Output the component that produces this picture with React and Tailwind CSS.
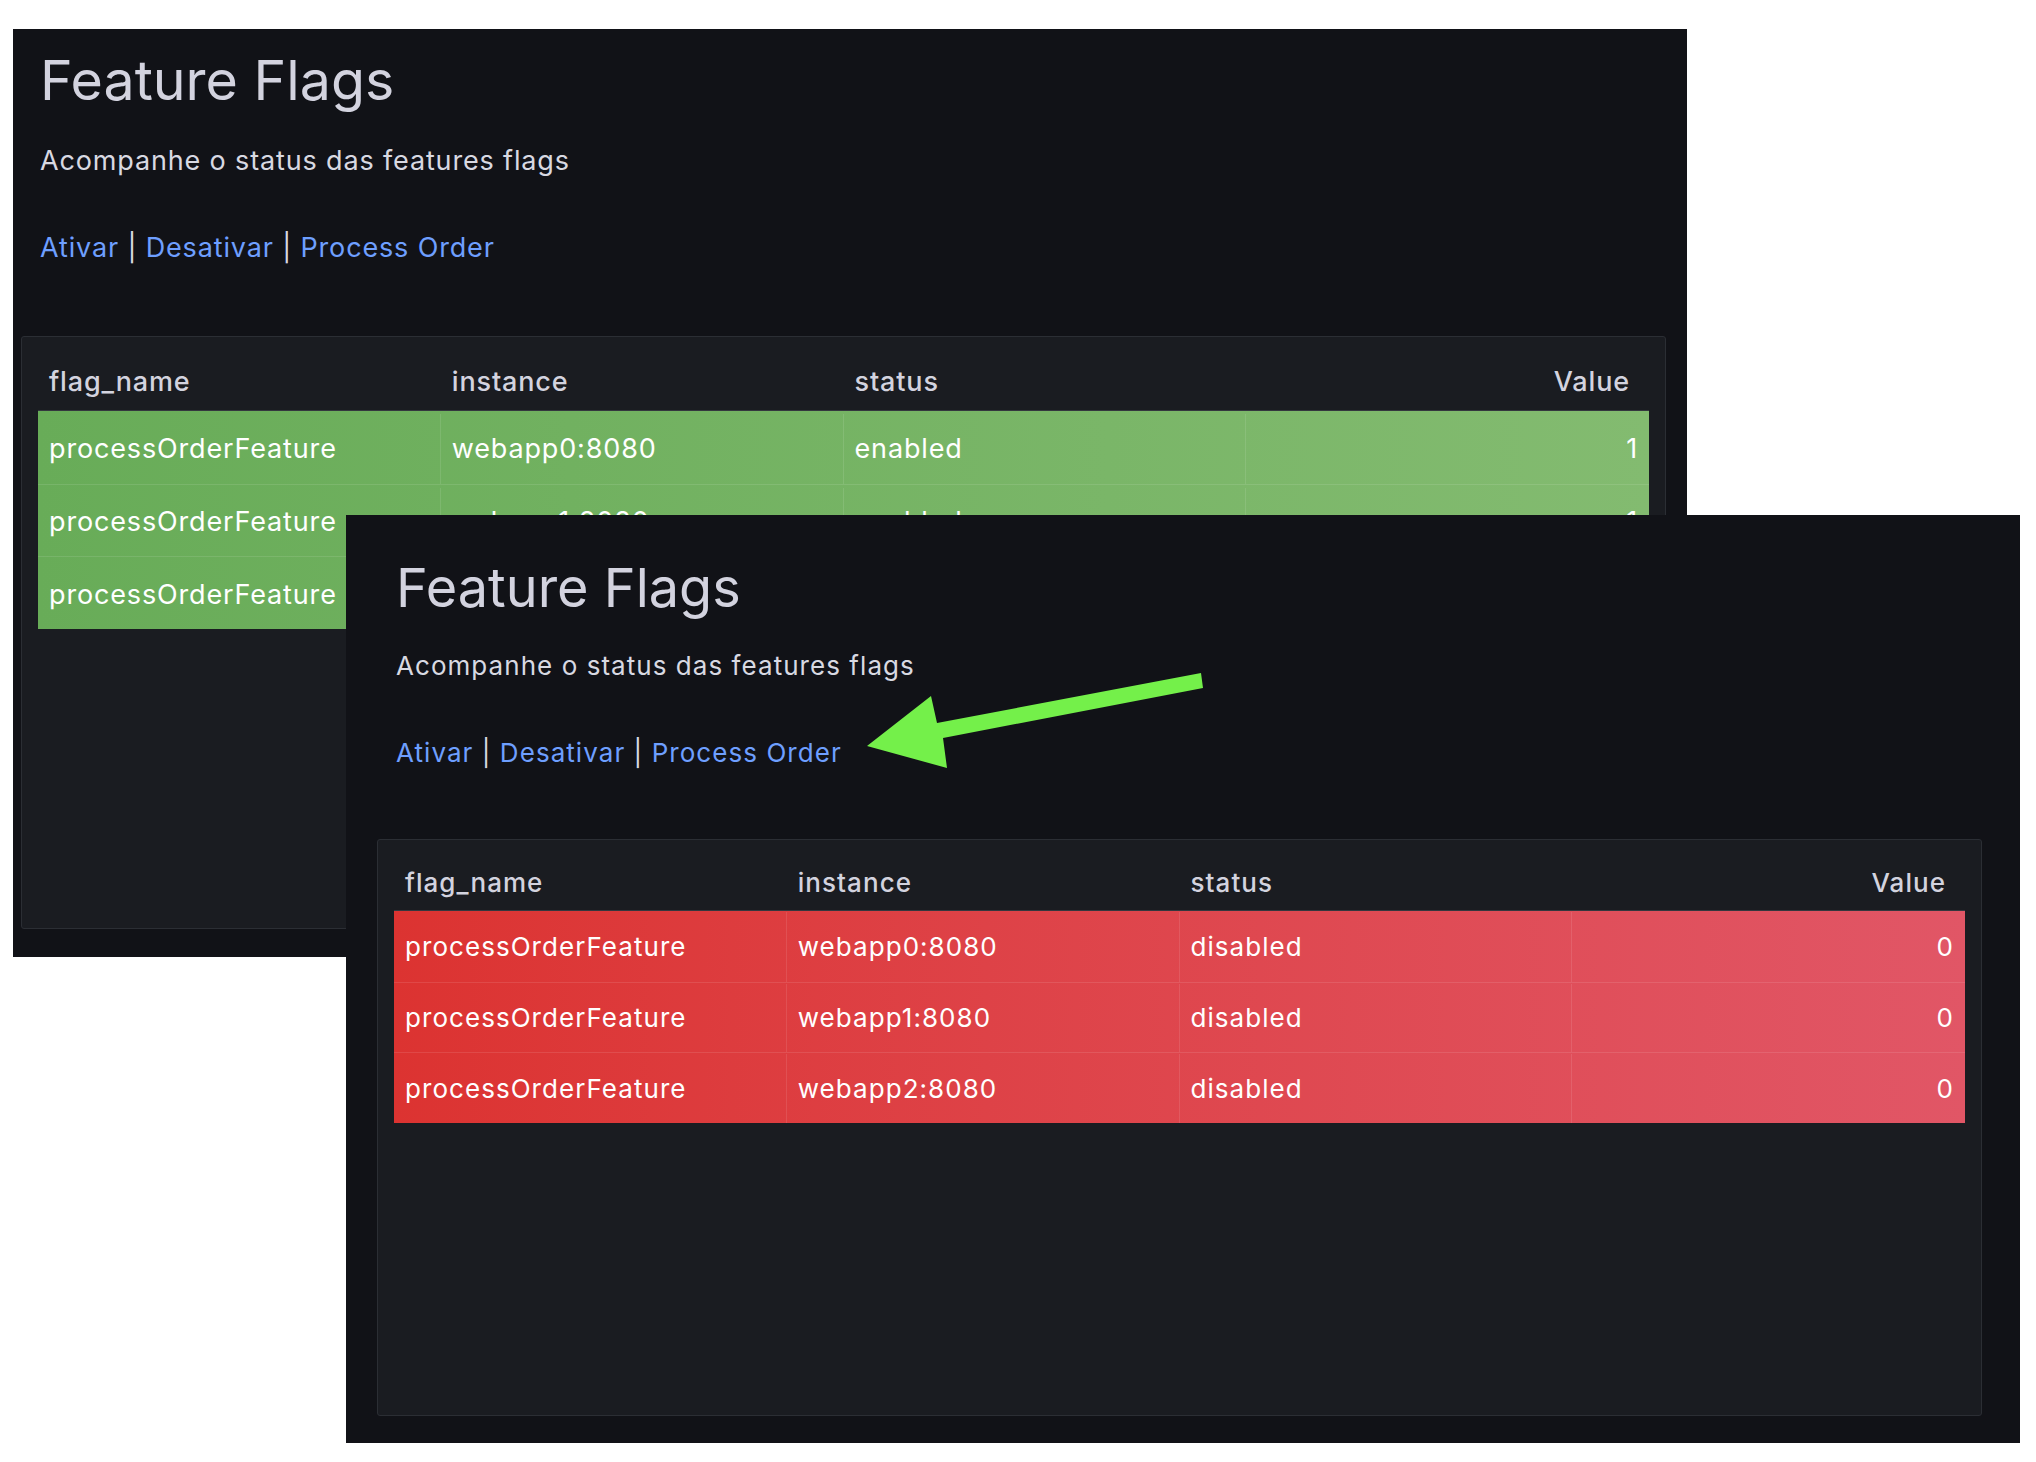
import React from "react";

const rows = [
	{ flag: "processOrderFeature", instance: "webapp0:8080" },
	{ flag: "processOrderFeature", instance: "webapp1:8080" },
	{ flag: "processOrderFeature", instance: "webapp2:8080" },
];

// two screenshots of the same grafana panel, one enabled (back) and one disabled (front)
const windows = [
	{
		key: "enabled",
		status: "enabled",
		value: "1",
		frame: "left-[13px] top-[29px]",
		head: "pt-[23px] pl-[27px]",
		title: "text-[55.5px] leading-[56px]",
		sub: "mt-[37px] text-[27px] leading-[32px] tracking-[0.85px]",
		links: "mt-[55px] text-[27px] leading-[32px] tracking-[0.85px]",
		panel: "mt-[72px] ml-[8px] mr-[21px] h-[593px] tracking-[0.85px]",
		header: "h-[74px] pt-[29px] text-[27px] leading-[32px]",
		row: "h-[72.67px] pt-[3px] text-[27px] leading-[32px]",
		fill: "bg-gradient-to-r from-[#68ac58] to-[#83bb70]",
	},
	{
		key: "disabled",
		status: "disabled",
		value: "0",
		frame: "left-[346px] top-[515px]",
		head: "pt-[46px] pl-[50px]",
		title: "text-[54px] leading-[54px]",
		sub: "mt-[35px] text-[26px] leading-[31px] tracking-[1.05px]",
		links: "mt-[56px] text-[26px] leading-[31px] tracking-[1.05px]",
		panel: "mt-[71px] ml-[31px] mr-[38px] h-[577px] tracking-[1.05px]",
		header: "h-[71px] pt-[27px] text-[26px] leading-[31px]",
		row: "h-[70.67px] pt-[1px] text-[26px] leading-[31px]",
		fill: "bg-gradient-to-r from-[#dc3331] to-[#e15666]",
	},
];

const FlagWindow = ({ w }) => {
	return (
		<div
			className={`absolute ${w.frame} w-[1674px] h-[928px] bg-[#111217] flex flex-col font-[Inter,sans-serif]`}
		>
			{/* TEXT PANEL */}
			<div className={w.head}>
				<h1 className={`${w.title} font-normal text-[#d3d3df]`}>Feature Flags</h1>
				<p className={`${w.sub} text-[#d8d9e2]`}>
					Acompanhe o status das features flags
				</p>
				<p className={`${w.links} text-[#d8d9e2]`}>
					<span className="text-[#6e9fff]">Ativar</span> |{" "}
					<span className="text-[#6e9fff]">Desativar</span> |{" "}
					<span className="text-[#6e9fff]">Process Order</span>
				</p>
			</div>
			{/* TABLE PANEL */}
			<div
				className={`${w.panel} bg-[#1a1c21] border border-[#2b2e34] rounded-[3px] px-[16px]`}
			>
				<div
					className={`${w.header} grid grid-cols-4 border-b border-[#34373e] font-medium text-[#d3d3df]`}
				>
					<span className="pl-[11px]">flag_name</span>
					<span className="pl-[11px]">instance</span>
					<span className="pl-[11px]">status</span>
					<span className="pr-[19px] text-right">Value</span>
				</div>
				<div className={w.fill}>
					{rows.map((r, i) => (
						<div
							key={r.instance}
							className={`${w.row} grid grid-cols-4 text-white ${
								i > 0 ? "border-t border-white/10" : ""
							}`}
						>
							<div className="flex items-center pl-[11px] border-r border-white/10">
								{r.flag}
							</div>
							<div className="flex items-center pl-[11px] border-r border-white/10">
								{r.instance}
							</div>
							<div className="flex items-center pl-[11px] border-r border-white/10">
								{w.status}
							</div>
							<div className="flex items-center justify-end pr-[11px]">
								{w.value}
							</div>
						</div>
					))}
				</div>
			</div>
		</div>
	);
};

const App = () => {
	return (
		<div className="relative w-[2036px] h-[1462px] bg-white overflow-hidden">
			<FlagWindow w={windows[0]} />
			<FlagWindow w={windows[1]} />
			{/* ARROW */}
			<svg
				className="absolute inset-0 pointer-events-none"
				width="2036"
				height="1462"
				viewBox="0 0 2036 1462"
			>
				<polygon
					points="1201,673 1203,688 943,738 947,768 867,746 931,696 937,723"
					fill="#74f04a"
				/>
			</svg>
		</div>
	);
};

export default App;
